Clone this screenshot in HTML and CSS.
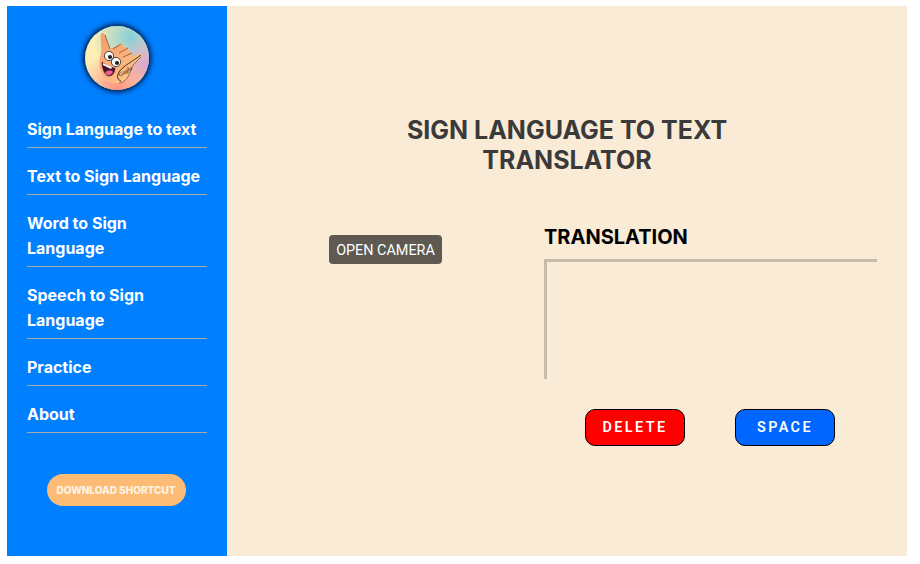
FILE: index.html
```html
<!DOCTYPE html>
<html lang="en">
<head>
<meta charset="utf-8">
<title>Sign Language to Text Translator</title>
<link rel="stylesheet" href="styles.css">
</head>
<body>
<div class="app">
  <aside class="sidebar">
    <div class="logo">
      <svg viewBox="0 0 64 64" width="64" height="64" aria-hidden="true">
        <defs>
          <radialGradient id="bgA" cx="0.72" cy="0.18" r="0.6"><stop offset="0" stop-color="#86cdd6"/><stop offset="1" stop-color="#86cdd6" stop-opacity="0"/></radialGradient>
          <radialGradient id="bgB" cx="1" cy="0.62" r="0.5"><stop offset="0" stop-color="#dc9fd2"/><stop offset="1" stop-color="#dc9fd2" stop-opacity="0"/></radialGradient>
          <radialGradient id="bgC" cx="0.5" cy="1" r="0.62"><stop offset="0" stop-color="#ff8f80"/><stop offset="1" stop-color="#ff8f80" stop-opacity="0"/></radialGradient>
          <linearGradient id="hand" x1="0" y1="0" x2="0.8" y2="1"><stop offset="0" stop-color="#f79a6c"/><stop offset="0.6" stop-color="#fbb27c"/><stop offset="1" stop-color="#ffd08c"/></linearGradient>
          <clipPath id="disc"><circle cx="32" cy="32" r="32"/></clipPath>
        </defs>
        <g clip-path="url(#disc)">
          <rect width="64" height="64" fill="#fdeeb4"/>
          <rect width="64" height="64" fill="url(#bgA)"/>
          <rect width="64" height="64" fill="url(#bgB)"/>
          <rect width="64" height="64" fill="url(#bgC)"/>
          <path d="M16 8C17 6 19 7 20 9L25 23L35 18C37 17 39 19 38 20L42 22C44 23 44 25 44 26L47 27C49 28 49 30 48 31L56 27C58 27 58 29 56 31L48 39C45 46 43 56 34 57C26 58 19 54 16 45C13 38 15 32 16 27C17 20 15 13 16 8Z" fill="url(#hand)"/>
          <path d="M20 9L25 23M28 23L36 18M34 27L43 22M38 31L47 27" stroke="#7d5040" stroke-width=".8" fill="none"/>
          <path d="M56 29C48 35 38 40 34 46C31 51 33 54 36 55" stroke="#2e211a" stroke-width=".9" fill="none"/>
          <path d="M56 31L48 39C45 46 43 56 34 57" stroke="#2e211a" stroke-width=".5" fill="none"/>
          <path d="M17 36C21 39 26 42 30 42C30 46 28 50 24 50C20 50 17 43 17 36Z" fill="#4a1430" stroke="#2a1020" stroke-width=".4"/>
          <path d="M20 47C22 44 26 44 28 46C26 50 22 50 20 47Z" fill="#ee5f8e"/>
          <path d="M18 37L27 41.5L26 43L18 39Z" fill="#fff"/>
          <circle cx="24" cy="30" r="4.6" fill="#fff" stroke="#222" stroke-width=".8"/>
          <circle cx="25" cy="31" r="2.1" fill="#222"/>
          <circle cx="31" cy="36" r="4.6" fill="#fff" stroke="#222" stroke-width=".8"/>
          <circle cx="32" cy="37" r="2.1" fill="#222"/>
          <text class="logo-word" x="0" y="0" transform="translate(35 51) rotate(-32)">Gagla</text>
        </g>
      </svg>
    </div>
    <nav class="nav">
      <a class="nav-link" href="#">Sign Language to text</a>
      <a class="nav-link" href="#">Text to Sign Language</a>
      <a class="nav-link" href="#">Word to Sign Language</a>
      <a class="nav-link" href="#">Speech to Sign Language</a>
      <a class="nav-link" href="#">Practice</a>
      <a class="nav-link" href="#">About</a>
    </nav>
    <button class="download" type="button">DOWNLOAD SHORTCUT</button>
  </aside>
  <main class="content">
    <h1 class="title">SIGN LANGUAGE TO TEXT<br>TRANSLATOR</h1>
    <div class="workspace">
      <div class="camera-col">
        <button class="camera" type="button">OPEN CAMERA</button>
      </div>
      <div class="translation-col">
        <h2 class="heading">TRANSLATION</h2>
        <div class="output"></div>
        <div class="actions">
          <button class="action delete" type="button">DELETE</button>
          <button class="action space" type="button">SPACE</button>
        </div>
      </div>
    </div>
  </main>
</div>
</body>
</html>
```

FILE: styles.css
```css
* { box-sizing: border-box; }
html, body { margin: 0; height: 100%; background: #fff; }
body { padding: 6px 13px 8px 7px; font-family: Inter, "Liberation Sans", sans-serif; overflow: hidden; }
.app { display: flex; height: 550px; }
.sidebar { width: 220px; flex: none; background: #007fff; padding: 20px 20px 0; display: flex; flex-direction: column; }
.logo { width: 64px; height: 64px; align-self: center; border-radius: 50%; box-shadow: 0 0 5px 2px #001a44; }
.logo svg { display: block; }
.logo-word { font: italic 700 6px "Liberation Serif", serif; fill: #7a3a25; }
.nav { display: flex; flex-direction: column; margin-top: 27px; }
.nav-link { display: block; color: #fff; font-size: 16px; font-weight: 700; line-height: 25px; text-decoration: none; padding: 0 0 5px; margin-bottom: 16px; border-bottom: 1px solid #a9a9a9; }
.download { align-self: center; margin-top: 25px; width: 139px; height: 32px; transform: translateX(-1px); border: 0; border-radius: 16px; background: #fcbc75; color: #fff3e6; font: 800 10px Inter, "Liberation Sans", sans-serif; padding: 0; }
.content { flex: 1; background: #faebd7; padding-top: 109px; }
.title { margin: 0; text-align: center; color: #3a3a3a; font-size: 25px; font-weight: 700; line-height: 30px; }
.workspace { display: flex; margin-top: 50px; }
.camera-col { width: 317px; flex: none; padding-left: 102px; padding-top: 10px; }
.camera { display: block; height: 29px; width: 113px; padding: 1px 0 0; border: 0; border-radius: 4px; background: #5e5a52; color: #fff; font: 400 14.4px Roboto, sans-serif; }
.translation-col { width: 333px; }
.heading { margin: 0 0 10px; color: #000; font-size: 20px; font-weight: 700; line-height: 24px; }
.output { height: 120px; border-top: 3px solid #c8bbaa; border-left: 3px solid #c8bbaa; }
.actions { display: flex; gap: 50px; margin-top: 30px; padding-left: 41px; }
.action { width: 100px; height: 37px; padding: 0; border: 1px solid #000; border-radius: 10px; color: #fff; font: 600 14.4px Roboto, sans-serif; letter-spacing: 2.4px; }
.delete { background: #f00; }
.space { background: #0066ff; }
```
